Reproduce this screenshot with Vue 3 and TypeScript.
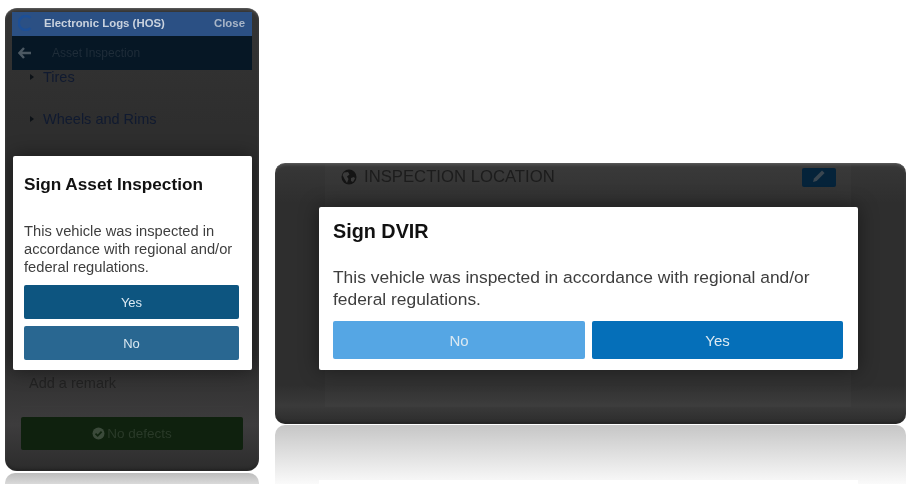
<template>
  <div class="canvas">
    <section class="shot phone-shot">
      <div class="frame phone">
        <div class="app-bar">
          <svg class="spinner" width="16" height="16" viewBox="0 0 16 16">
            <path d="M12.5 2.8A7 7 0 1 0 12.5 13.2" fill="none" stroke="#1d4f96" stroke-width="2.4" />
          </svg>
          <span class="app-title">Electronic Logs (HOS)</span>
          <span class="app-close">Close</span>
        </div>
        <div class="nav-bar">
          <svg class="back" width="14" height="12" viewBox="0 0 14 12">
            <path d="M6 1 1.5 6 6 11M2 6h11" fill="none" stroke="#4b5862" stroke-width="2.4" />
          </svg>
          <span>Asset Inspection</span>
        </div>
        <div class="phone-list">
          <div v-for="row in rows" :key="row" class="list-row">
            <i class="caret"></i>
            <span>{{ row }}</span>
          </div>
        </div>
        <div class="phone-foot">
          <div class="remark">Add a remark</div>
          <div class="defects">
            <svg width="13" height="13" viewBox="0 0 13 13">
              <circle cx="6.5" cy="6.5" r="6" fill="#3b4a3a" />
              <path d="M3.5 6.6 5.7 8.8 9.6 4.6" fill="none" stroke="#10240f" stroke-width="1.8" />
            </svg>
            <span>No defects</span>
          </div>
        </div>

        <div class="modal phone-modal">
          <h2>Sign Asset Inspection</h2>
          <p>This vehicle was inspected in accordance with regional and/or federal regulations.</p>
          <div class="stack">
            <button class="btn yes-dark">Yes</button>
            <button class="btn no-dark">No</button>
          </div>
        </div>
      </div>
      <div class="mirror phone-mirror"></div>
    </section>

    <section class="shot wide-shot">
      <div class="frame wide">
        <div class="wide-panel">
          <div class="location">
            <svg width="16" height="16" viewBox="0 0 16 16">
              <circle cx="8" cy="8" r="7.5" fill="#141414" />
              <path d="M3 3.5 7 3 8.5 5.5 6 7.5 7.5 10 6 14 3.5 10 1.5 6ZM10 9l3-1 1 1.5L12 13l-2-1Z" fill="#3a3a3a" />
            </svg>
            <span>INSPECTION LOCATION</span>
            <div class="edit">
              <svg width="16" height="16" viewBox="0 0 16 16">
                <path d="M2 14l1-3.6L11 2.4l2.6 2.6L5.6 13Z" fill="#3a4650" />
              </svg>
            </div>
          </div>
        </div>

        <div class="modal wide-modal">
          <h2>Sign DVIR</h2>
          <p>This vehicle was inspected in accordance with regional and/or federal regulations.</p>
          <div class="split">
            <button class="btn no-light">No</button>
            <button class="btn yes-blue">Yes</button>
          </div>
        </div>
      </div>
      <div class="mirror wide-mirror">
        <div class="mirror-modal"></div>
      </div>
    </section>
  </div>
</template>

<script setup lang="ts">
const rows: string[] = ['Tires', 'Wheels and Rims']
</script>

<style>
html,
body {
  background: #fff;
  overflow: hidden;
}
</style>

<style scoped>
.canvas {
  width: 914px;
  height: 484px;
  overflow: hidden;
  display: flex;
  gap: 16px;
  padding-left: 5px;
  box-sizing: border-box;
  background: #fff;
  font-family: "Liberation Sans", Arial, sans-serif;
  filter: blur(0.3px);
}

.shot {
  display: flex;
  flex-direction: column;
  gap: 2px;
}

.phone-shot {
  width: 254px;
  padding-top: 8px;
}

.wide-shot {
  width: 631px;
  padding-top: 163px;
}

.frame {
  position: relative;
  box-sizing: border-box;
  overflow: hidden;
  flex: none;
  border-top: 1px solid #555;
  box-shadow: inset 0 1px 3px rgba(255, 255, 255, 0.14), inset 0 -2px 3px rgba(0, 0, 0, 0.25);
}

.phone {
  height: 463px;
  padding: 3px 7px 0;
  border-radius: 12px;
  background: linear-gradient(#343434, #2e2e2e 25%, #2e2e2e 75%, #3d3c3d 90%, #2c2c2c);
}

.app-bar {
  box-sizing: border-box;
  height: 24px;
  display: flex;
  align-items: center;
  padding: 0 7px 2px 6px;
  background: #2b5084;
  font-size: 11.4px;
  font-weight: 700;
  color: #c9d2de;
}

.spinner {
  flex: none;
  margin-right: 10px;
}

.app-title {
  flex: 1;
}

.app-close {
  color: #a9b6c8;
}

.nav-bar {
  height: 34px;
  display: flex;
  align-items: center;
  gap: 20px;
  padding-left: 6px;
  background: #061725;
  color: #1f2d39;
  font-size: 12px;
}

.phone-list {
  padding: 0 18px;
  color: #101a30;
  font-size: 14.5px;
}

.list-row {
  height: 42px;
  display: flex;
  align-items: flex-start;
  gap: 9px;
  line-height: 14px;
}

.caret {
  width: 0;
  height: 0;
  margin-top: 4px;
  border-left: 4px solid #0d1217;
  border-top: 3.5px solid transparent;
  border-bottom: 3.5px solid transparent;
}

.phone-foot {
  position: absolute;
  left: 16px;
  right: 16px;
  top: 364px;
}

.remark {
  height: 34px;
  padding: 0 8px;
  line-height: 20px;
  font-size: 14.5px;
  color: #222;
  border-bottom: 1px solid #3a3a3a;
  box-sizing: border-box;
}

.defects {
  height: 33px;
  margin-top: 10px;
  display: flex;
  align-items: center;
  justify-content: center;
  gap: 2px;
  border-radius: 2px;
  background: #0f210e;
  color: #2a3a29;
  font-size: 13.5px;
}

.wide {
  height: 261px;
  border-radius: 10px;
  background: linear-gradient(#373737, #2e2e2e 15%, #2e2e2e 85%, #3a3a3a 93%, #2c2c2c);
}

.wide-panel {
  margin: 0 55px 0 50px;
  height: 243px;
  background: rgba(255, 255, 255, 0.015);
}

.location {
  height: 26px;
  display: flex;
  align-items: flex-start;
  gap: 7px;
  padding-left: 16px;
  font-size: 16.7px;
  line-height: 26px;
  color: #1c1c1c;
}

.location svg {
  margin-top: 5px;
  flex: none;
}

.edit {
  margin-left: auto;
  margin-right: 15px;
  margin-top: 4px;
  width: 34px;
  height: 19px;
  display: flex;
  justify-content: center;
  overflow: hidden;
  background: #05233a;
  border-radius: 2px;
}

.edit svg {
  margin-top: 0;
}

.modal {
  position: absolute;
  box-sizing: border-box;
  background: #fff;
  border-radius: 2px;
  color: #111;
  box-shadow: 0 0 20px rgba(0, 0, 0, 0.45);
}

.modal h2 {
  margin: 0;
  font-weight: 700;
}

.modal p {
  margin: 0;
  color: #3e3e3e;
}

.phone-modal {
  left: 8px;
  top: 147px;
  width: 239px;
  height: 214px;
  padding: 19px 13px 0 11px;
}

.phone-modal h2 {
  font-size: 17.2px;
  line-height: 18px;
}

.phone-modal p {
  margin-top: 29px;
  font-size: 14.7px;
  line-height: 18px;
}

.stack {
  margin-top: 9px;
  display: grid;
  gap: 7px;
}

.btn {
  border: 0;
  border-radius: 2px;
  padding: 0;
  font-family: inherit;
  color: #dbe9f2;
}

.stack .btn {
  height: 34px;
  font-size: 13px;
}

.yes-dark {
  background: #0d5580;
}

.no-dark {
  background: #296791;
}

.wide-modal {
  left: 44px;
  top: 43px;
  width: 539px;
  height: 163px;
  padding: 14px 15px 0 14px;
}

.wide-modal h2 {
  font-size: 19.8px;
  line-height: 20px;
}

.wide-modal p {
  margin-top: 25px;
  font-size: 17.4px;
  line-height: 22px;
}

.split {
  margin-top: 11px;
  display: grid;
  grid-template-columns: 252px 251px;
  gap: 7px;
}

.split .btn {
  height: 38px;
  font-size: 15px;
}

.no-light {
  background: #55a6e4;
}

.yes-blue {
  background: #056fb9;
}

.mirror {
  flex: 1;
  background: linear-gradient(#c6c6c6, #fafafa);
}

.phone-mirror {
  border-radius: 10px 10px 0 0;
  background: linear-gradient(#bdbdbd, #d9d9d9);
}

.wide-mirror {
  position: relative;
  border-radius: 10px 10px 0 0;
  margin-top: -1px;
}

.mirror-modal {
  position: absolute;
  left: 44px;
  top: 55px;
  width: 539px;
  height: 10px;
  background: #fff;
}
</style>
